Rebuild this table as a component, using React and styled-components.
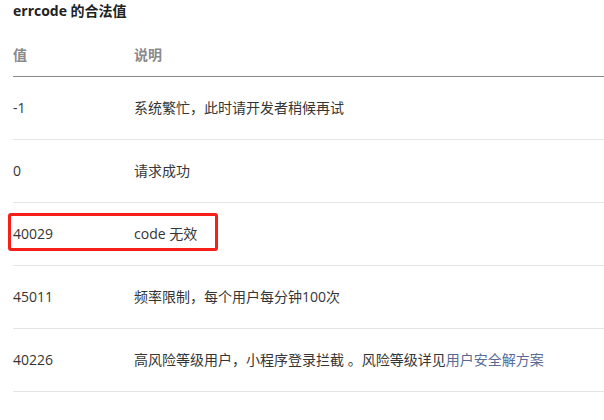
import React from 'react';
import styled, { createGlobalStyle } from 'styled-components';

const GlobalStyle = createGlobalStyle`
  html, body {
    margin: 0;
    padding: 0;
    background: #ffffff;
  }
  body {
    font-family: "Open Sans", "Noto Sans CJK SC", sans-serif;
    font-size: 14px;
    color: #353535;
  }
`;

const Page = styled.div`
  padding-left: 13px;
  width: 604px;
  box-sizing: border-box;
  overflow: hidden;
`;

const Title = styled.h3`
  margin: 0;
  height: 34px;
  line-height: 22px;
  font-size: 14px;
  font-weight: 700;
  color: #222222;
`;

const Table = styled.div`
  width: 100%;
`;

const Row = styled.div`
  display: grid;
  grid-template-columns: 121px 1fr;
  align-items: center;
  position: relative;
  height: ${props => (props.head ? '42px' : '62px')};
  border-bottom: 1px solid ${props => (props.head ? '#8a8a8a' : '#e5e5e5')};
  color: ${props => (props.head ? '#8a8a8a' : '#353535')};
  font-weight: ${props => (props.head ? 700 : 400)};
  white-space: nowrap;
`;

const Cell = styled.div`
  line-height: 20px;
`;

const Link = styled.a`
  color: #576b95;
  text-decoration: none;
`;

// red annotation frame drawn over the highlighted row
const Highlight = styled.div`
  position: absolute;
  left: -5px;
  top: 10px;
  width: 210px;
  height: 38px;
  box-sizing: border-box;
  border: 3px solid #f5201a;
  border-radius: 3px;
  pointer-events: none;
`;

const rows = [
  { code: '-1', desc: '系统繁忙，此时请开发者稍候再试' },
  { code: '0', desc: '请求成功' },
  { code: '40029', desc: 'code 无效', marked: true },
  { code: '45011', desc: '频率限制，每个用户每分钟100次' },
  {
    code: '40226',
    desc: (
      <>
        高风险等级用户，小程序登录拦截 。风险等级详见<Link href="#">用户安全解方案</Link>
      </>
    ),
  },
];

const App = () => (
  <Page>
    <GlobalStyle />
    <Title>errcode 的合法值</Title>
    <Table>
      <Row head>
        <Cell>值</Cell>
        <Cell>说明</Cell>
      </Row>
      {rows.map(r => (
        <Row key={r.code}>
          <Cell>{r.code}</Cell>
          <Cell>{r.desc}</Cell>
          {r.marked && <Highlight />}
        </Row>
      ))}
    </Table>
  </Page>
);

export default App;
